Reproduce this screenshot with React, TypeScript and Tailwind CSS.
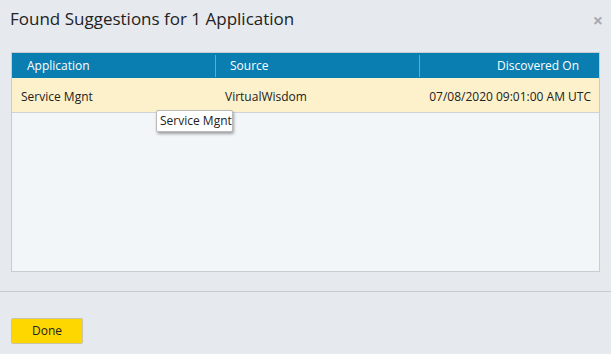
import React from "react";

export default function App() {
  return (
    <div
      className="relative w-[611px] h-[354px] bg-[#e6e9ee] overflow-hidden"
      style={{ fontFamily: '"Open Sans", sans-serif' }}
    >
      <div className="flex items-start justify-between pl-[10px] pr-[8px] pt-[7px] h-[52px]">
        <h1 className="text-[17px] leading-[24px] text-[#222]">Found Suggestions for 1 Application</h1>
        <span className="text-[#a8aab0] text-[18px] leading-[18px] font-bold mt-[4px]">×</span>
      </div>
      <div className="mx-[11px] h-[220px] border border-[#c9ccd1] bg-[#f3f6f9] flex flex-col">
        <div className="flex h-[25px] bg-[#0b7eb1] text-white text-[12px] items-center">
          <div className="w-[204px] pl-[15px] border-r border-[#5fa9cf] h-[22px] flex items-center">Application</div>
          <div className="w-[204px] pl-[14px] border-r border-[#5fa9cf] h-[22px] flex items-center">Source</div>
          <div className="flex-1 pr-[20px] text-right">Discovered On</div>
        </div>
        <div className="flex h-[35px] pt-[4px] bg-[#fdf1cb] border-b border-[#cfd2d6] text-[12px] text-[#222] items-center whitespace-nowrap">
          <div className="w-[204px] pl-[9px]">Service Mgnt</div>
          <div className="w-[204px] pl-[9px]">VirtualWisdom</div>
          <div className="flex-1 pr-[8px] text-right">07/08/2020 09:01:00 AM UTC</div>
        </div>
      </div>
      <div className="mt-[19px] border-t border-[#c8cbd0]" />
      <div className="pl-[11px] pt-[25px]">
        <button className="w-[72px] h-[26px] bg-[#ffd700] border border-[#c9c4a8] rounded-[2px] text-[12px] text-[#222]">
          Done
        </button>
      </div>
      <div className="absolute left-[156px] top-[110px] w-[77px] h-[22px] bg-white border border-[#bbb] rounded-[2px] shadow-[1px_2px_3px_rgba(0,0,0,0.35)] text-[12px] leading-[20px] pl-[3px] text-[#222]">
        Service Mgnt
      </div>
    </div>
  );
}
